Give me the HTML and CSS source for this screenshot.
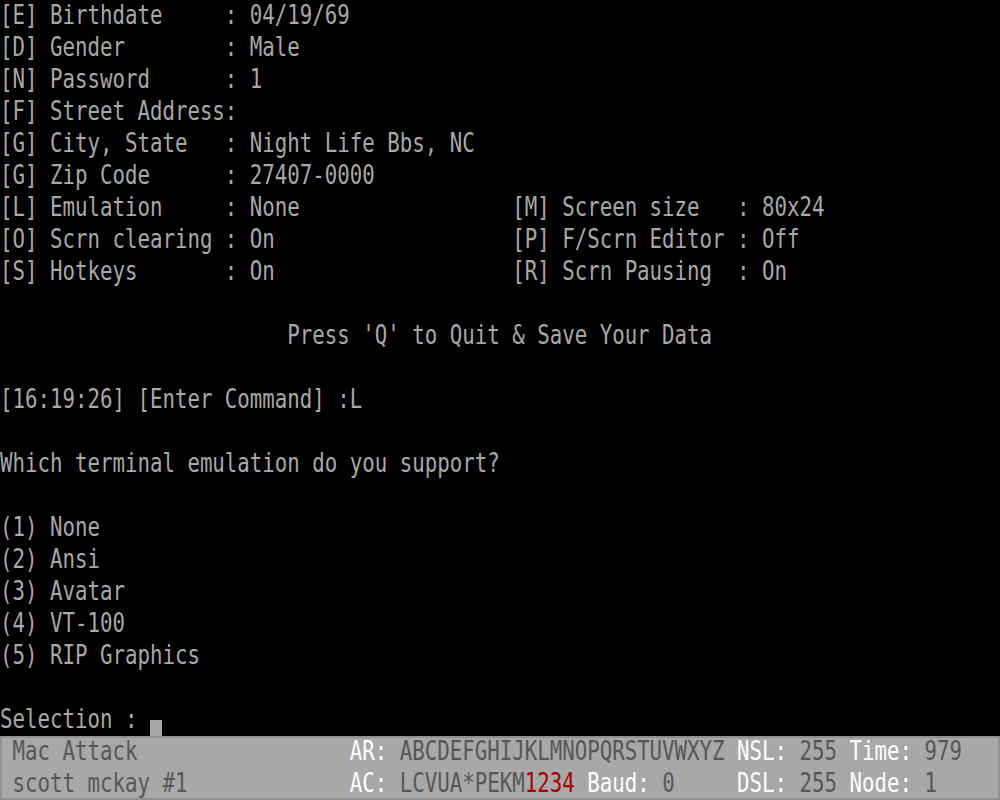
FILE: index.html
```html
<!DOCTYPE html>
<html lang="en">

<head>
  <meta charset="UTF-8">
  <title>User Settings - Terminal</title>
  <link rel="stylesheet" href="styles.css">
</head>

<body>
  <div class="screen">
    <div class="row"><span class="t">[E] Birthdate     : 04/19/69</span></div>
    <div class="row"><span class="t">[D] Gender        : Male</span></div>
    <div class="row"><span class="t">[N] Password      : 1</span></div>
    <div class="row"><span class="t">[F] Street Address:</span></div>
    <div class="row"><span class="t">[G] City, State   : Night Life Bbs, NC</span></div>
    <div class="row"><span class="t">[G] Zip Code      : 27407-0000</span></div>
    <div class="row"><span class="t">[L] Emulation     : None                 [M] Screen size   : 80x24</span></div>
    <div class="row"><span class="t">[O] Scrn clearing : On                   [P] F/Scrn Editor : Off</span></div>
    <div class="row"><span class="t">[S] Hotkeys       : On                   [R] Scrn Pausing  : On</span></div>
    <div class="row"></div>
    <div class="row"><span class="t">                       Press 'Q' to Quit &amp; Save Your Data</span></div>
    <div class="row"></div>
    <div class="row"><span class="t">[16:19:26] [Enter Command] :L</span></div>
    <div class="row"></div>
    <div class="row"><span class="t">Which terminal emulation do you support?</span></div>
    <div class="row"></div>
    <div class="row"><span class="t">(1) None</span></div>
    <div class="row"><span class="t">(2) Ansi</span></div>
    <div class="row"><span class="t">(3) Avatar</span></div>
    <div class="row"><span class="t">(4) VT-100</span></div>
    <div class="row"><span class="t">(5) RIP Graphics</span></div>
    <div class="row"></div>
    <div class="row"><span class="t">Selection : </span><span class="cursor"></span></div>

    <!-- status bar -->
    <div class="status">
      <div class="row"><span class="t"> Mac Attack                 <b>AR:</b> ABCDEFGHIJKLMNOPQRSTUVWXYZ <b>NSL:</b> 255 <b>Time:</b> 979</span></div>
      <div class="row"><span class="t"> scott mckay #1             <b>AC:</b> LCVUA*PEKM<i>1234</i> <b>Baud:</b> 0     <b>DSL:</b> 255 <b>Node:</b> 1</span></div>
    </div>
  </div>
</body>

</html>
```

FILE: styles.css
```css
body {
  margin: 0;
  background-color: #000;
}

.screen {
  width: 1000px;
  height: 800px;
  overflow: hidden;
  background-color: #000;
  color: #a8a8a8;
  font-family: "DejaVu Sans Mono", monospace;
  font-size: 20.76px;
}

.row {
  height: 32px;
  line-height: 32px;
  white-space: pre;
}

/* stretch glyphs to the tall VGA cell */
.t {
  display: inline-block;
  transform: translateY(-2px) scaleY(1.32);
  transform-origin: 50% 45%;
}

.cursor {
  display: inline-block;
  width: 12.5px;
  height: 16px;
  vertical-align: bottom;
  background-color: #a8a8a8;
}

.status {
  height: 64px;
  background-color: #a8a8a8;
  color: #575757;
  box-shadow: inset 0 0 0 2px #909090;
}

.status b {
  font-weight: normal;
  color: #fff;
}

.status i {
  font-style: normal;
  color: #aa0000;
}
```
